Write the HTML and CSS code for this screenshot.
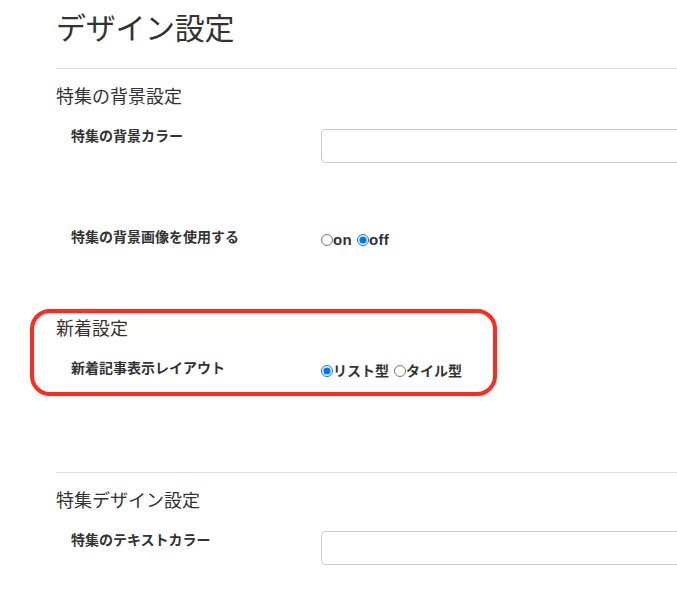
FILE: index.html
```html
<!DOCTYPE html>
<html lang="ja">
<head>
<meta charset="utf-8">
<title>デザイン設定</title>
<link rel="stylesheet" href="styles.css">
</head>
<body>
<div class="page">
  <h1 class="title">デザイン設定</h1>
  <hr class="rule rule-top">

  <section class="group">
    <h2 class="group-title">特集の背景設定</h2>
    <div class="row row-input">
      <label class="row-label">特集の背景カラー</label>
      <div class="row-field"><input class="text-input" type="text"></div>
    </div>
    <div class="row row-radio row-gap">
      <span class="row-label">特集の背景画像を使用する</span>
      <div class="row-field radios">
        <label class="radio radio-latin"><input type="radio" name="bg">on</label>
        <label class="radio radio-latin"><input type="radio" name="bg" checked>off</label>
      </div>
    </div>
  </section>

  <section class="group group-new">
    <div class="highlight"></div>
    <h2 class="group-title">新着設定</h2>
    <div class="row row-radio">
      <span class="row-label">新着記事表示レイアウト</span>
      <div class="row-field radios">
        <label class="radio"><input type="radio" name="layout" checked>リスト型</label>
        <label class="radio"><input type="radio" name="layout">タイル型</label>
      </div>
    </div>
  </section>

  <hr class="rule rule-mid">

  <section class="group group-last">
    <h2 class="group-title">特集デザイン設定</h2>
    <div class="row row-input row-input-tight">
      <label class="row-label">特集のテキストカラー</label>
      <div class="row-field"><input class="text-input" type="text"></div>
    </div>
  </section>
</div>
</body>
</html>
```

FILE: styles.css
```css
* {
  box-sizing: border-box;
}

html, body {
  margin: 0;
  padding: 0;
  background: #ffffff;
  overflow: hidden;
}

body {
  font-family: "Liberation Sans", "Noto Sans CJK JP", sans-serif;
  color: #333333;
}

.page {
  padding-left: 56px;
  width: 677px;
  height: 596px;
  overflow: hidden;
}

.title {
  margin: 9px 0 0 0;
  font-size: 30px;
  line-height: 40px;
  font-weight: 400;
  color: #333333;
  letter-spacing: -0.3px;
}

.rule {
  border: 0;
  border-top: 1px solid #dddddd;
  margin: 0;
  width: 700px;
}

.rule-top {
  margin-top: 19px;
}

.rule-mid {
  margin-top: 91px;
}

.group {
  position: relative;
}

.group-title {
  margin: 15px 0 0 0;
  font-size: 18px;
  line-height: 26px;
  font-weight: 400;
  color: #333333;
}

.group-new {
  margin-top: 66px;
}

.group-new .group-title {
  margin-top: 0;
}

.row {
  display: grid;
  grid-template-columns: 250px 1fr;
  padding-left: 15px;
}

.row-label {
  font-size: 14px;
  line-height: 20px;
  font-weight: 700;
  color: #333333;
}

.row-input {
  margin-top: 16px;
}

.row-input .row-field {
  padding-top: 3px;
}

.row-input-tight .row-field {
  padding-top: 1px;
}

.text-input {
  display: block;
  width: 420px;
  height: 34px;
  border: 1px solid #cccccc;
  border-radius: 4px;
  background: #ffffff;
  margin: 0;
  padding: 6px 12px;
  font: inherit;
}

.row-radio {
  margin-top: 16px;
}

.row-gap {
  margin-top: 64px;
}

.radios {
  display: flex;
  align-items: center;
  gap: 5px;
  padding-top: 3px;
  height: 23px;
}

.radio {
  display: inline-flex;
  align-items: center;
  font-size: 14px;
  line-height: 20px;
  font-weight: 700;
  color: #333333;
}

.radio-latin {
  font-size: 15px;
  letter-spacing: 0.3px;
}

.radio input {
  margin: 0;
  width: 12px;
  height: 12px;
}

.highlight {
  position: absolute;
  left: -26px;
  top: -7px;
  width: 467px;
  height: 87px;
  border: 4px solid #ff2a1f;
  border-radius: 20px;
  pointer-events: none;
}
```
